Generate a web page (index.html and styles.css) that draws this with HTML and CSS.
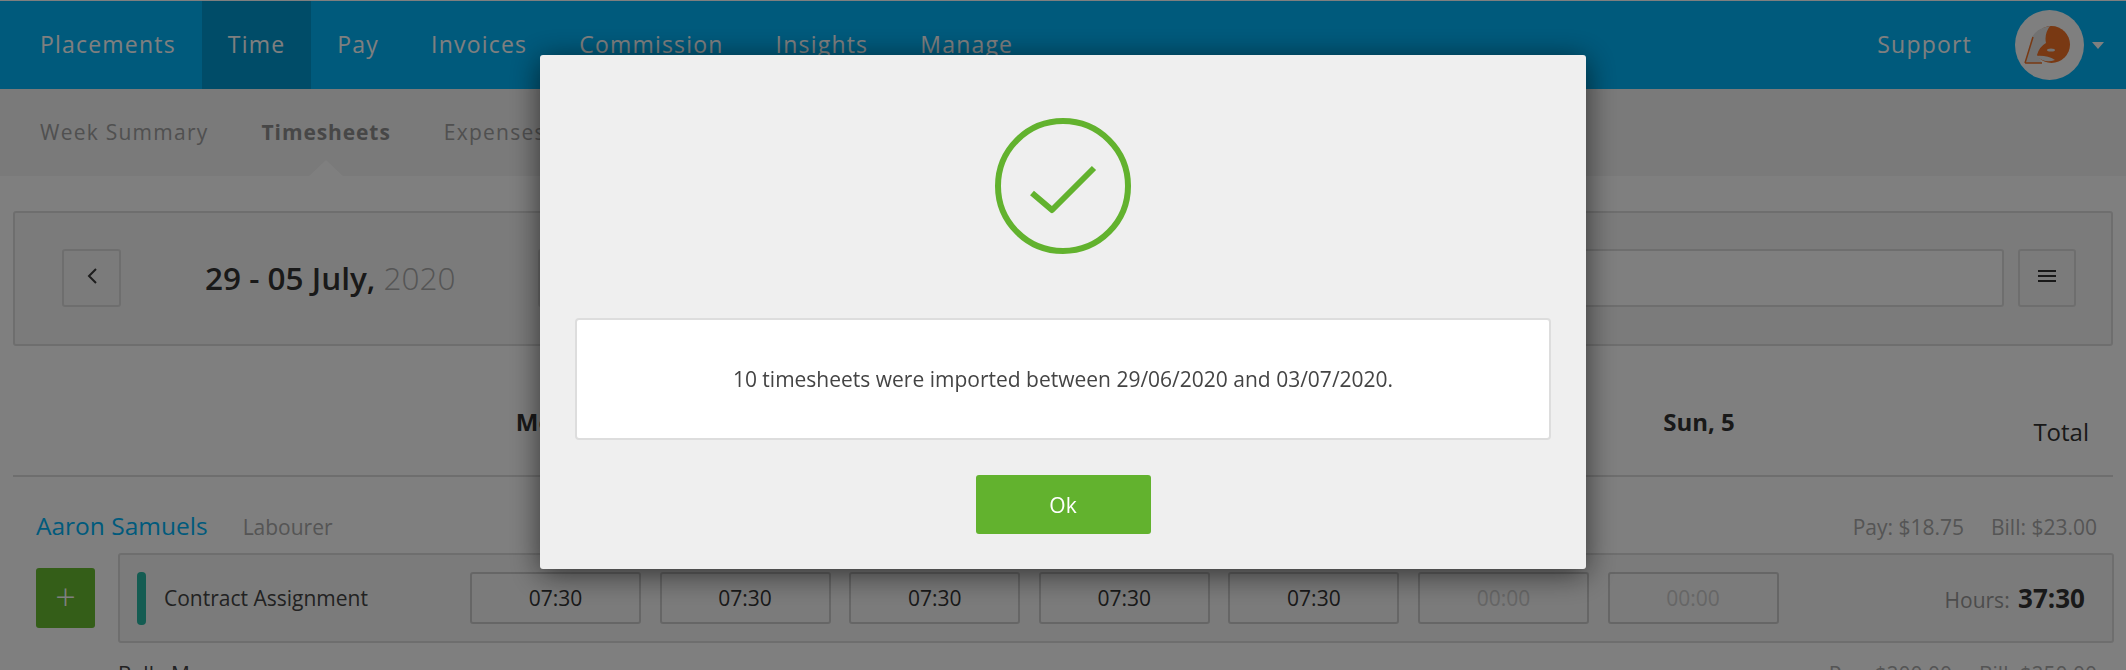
FILE: index.html
```html
<!DOCTYPE html>
<html lang="en">
<head>
    <meta charset="UTF-8">
    <title>Timesheets</title>
    <link rel="stylesheet" href="styles.css">
</head>
<body>
    <nav class="topbar">
        <a class="top-link">Placements</a>
        <a class="top-link active">Time</a>
        <a class="top-link">Pay</a>
        <a class="top-link">Invoices</a>
        <a class="top-link">Commission</a>
        <a class="top-link">Insights</a>
        <a class="top-link">Manage</a>
        <a class="top-link support">Support</a>
        <div class="avatar">
            <svg viewBox="0 0 69 70" width="69" height="70">
                <circle cx="36.5" cy="34.5" r="18.5" fill="#f27226"/>
                <path d="M10 53 L17 27 Q22 18 35 16 Q29 24 31 33 Q24 37 22 45 L27 53 Z" fill="#e4e4e4"/>
                <path d="M10 53 L18 27 M10 53 L27 53" stroke="#f27226" stroke-width="1.5" fill="none"/>
                <ellipse cx="36" cy="40" rx="4" ry="1.6" fill="#e8e8e8"/>
                <path d="M21 46 Q32 45 40 50 Q30 54 21 46 Z" fill="#e8e8e8"/>
            </svg>
        </div>
        <span class="caret"></span>
    </nav>

    <div class="subnav">
        <a class="sub-link">Week Summary</a>
        <a class="sub-link active">Timesheets</a>
        <a class="sub-link">Expenses</a>
    </div>

    <section class="filter-bar">
        <button class="square-btn back-btn">
            <svg viewBox="0 0 12 18" width="12" height="18"><path d="M10 2 L3 9 L10 16" fill="none" stroke="#3a3a3a" stroke-width="2"/></svg>
        </button>
        <h2 class="date-range">29 - 05 July, <span>2020</span></h2>
        <div class="search-box"></div>
        <button class="square-btn menu-btn">
            <svg viewBox="0 0 18 14" width="18" height="14"><path d="M0 2 H18 M0 7 H18 M0 12 H18" stroke="#333" stroke-width="2"/></svg>
        </button>
    </section>

    <div class="day-head">
        <span class="day">Mon, 29</span>
        <span class="day">Tue, 30</span>
        <span class="day">Wed, 1</span>
        <span class="day">Thu, 2</span>
        <span class="day">Fri, 3</span>
        <span class="day">Sat, 4</span>
        <span class="day">Sun, 5</span>
        <span class="total-label">Total</span>
    </div>

    <section class="worker">
        <div class="worker-head">
            <a class="worker-name">Aaron Samuels</a>
            <span class="worker-role">Labourer</span>
            <span class="rates"><span>Pay: $18.75</span><span>Bill: $23.00</span></span>
        </div>
        <div class="worker-row">
            <button class="add-btn">+</button>
            <div class="assignment">
                <span class="color-bar"></span>
                <span class="assignment-name">Contract Assignment</span>
                <div class="cells">
                    <div class="cell">07:30</div>
                    <div class="cell">07:30</div>
                    <div class="cell">07:30</div>
                    <div class="cell">07:30</div>
                    <div class="cell">07:30</div>
                    <div class="cell empty">00:00</div>
                    <div class="cell empty">00:00</div>
                </div>
                <div class="hours">Hours: <b>37:30</b></div>
            </div>
        </div>
    </section>

    <section class="worker next">
        <span class="next-name">Bella Moore</span>
        <span class="rates"><span>Pay: $200.00</span><span>Bill: $250.00</span></span>
    </section>

    <div class="overlay">
        <div class="modal">
            <svg class="check" viewBox="0 0 136 136" width="136" height="136">
                <circle cx="68" cy="68" r="65" fill="none" stroke="#62b22e" stroke-width="6"/>
                <path d="M37 75 L57 92 L99 50" fill="none" stroke="#62b22e" stroke-width="6" stroke-linejoin="round"/>
            </svg>
            <div class="message">10 timesheets were imported between 29/06/2020 and 03/07/2020.</div>
            <button class="ok-btn">Ok</button>
        </div>
    </div>
</body>
</html>
```

FILE: styles.css
```css
* {
    box-sizing: border-box;
}

html, body {
    height: 670px;
    overflow: hidden;
}

body {
    margin: 0;
    font-family: 'Open Sans', sans-serif;
    background-color: #fff;
    color: #333;
}

button {
    font-family: inherit;
}

/* Top bar */
.topbar {
    display: flex;
    align-items: center;
    height: 88px;
    margin-top: 1px;
    padding: 0 22px 0 14px;
    background-color: #00b4f8;
}

.top-link {
    display: flex;
    align-items: center;
    height: 100%;
    padding: 0 26px 3px;
    font-size: 23px;
    letter-spacing: 1.2px;
    color: #fff;
}

.top-link.active {
    background-color: #0098d0;
}

.top-link.support {
    margin-left: auto;
    padding: 0 43px 3px 0;
}

.avatar {
    width: 69px;
    height: 70px;
    border-radius: 50%;
    background-color: #fff;
    overflow: hidden;
}

.caret {
    margin-left: 8px;
    border-left: 6px solid transparent;
    border-right: 6px solid transparent;
    border-top: 7px solid #fff;
}

/* Sub nav */
.subnav {
    display: flex;
    align-items: center;
    gap: 53px;
    height: 87px;
    padding: 0 40px 2px;
    background-color: #f4f4f4;
}

.sub-link {
    font-size: 21px;
    letter-spacing: 1.25px;
    color: #a0a0a0;
}

.sub-link.active {
    font-weight: 700;
    letter-spacing: 0.9px;
    color: #8f8f8f;
    position: relative;
}

/* notch under the active tab */
.sub-link.active::after {
    content: "";
    position: absolute;
    left: 46px;
    top: 42px;
    border-left: 18px solid transparent;
    border-right: 18px solid transparent;
    border-bottom: 17px solid #fff;
}

/* Date filter */
.filter-bar {
    display: flex;
    align-items: center;
    height: 135px;
    margin: 35px 13px 0;
    padding: 0 35px 1px 47px;
    border: 2px solid #ddd;
    border-radius: 3px;
    background-color: #f7f7f7;
}

.square-btn {
    height: 58px;
    padding: 0;
    border: 2px solid #ddd;
    border-radius: 3px;
    background-color: #f7f7f7;
}

.back-btn {
    width: 59px;
}

.menu-btn {
    width: 58px;
    margin-left: 14px;
}

.date-range {
    width: 333px;
    margin: 0 0 2px 84px;
    font-size: 31.5px;
    font-weight: 600;
    color: #333;
}

.date-range span {
    font-weight: 300;
    color: #aaa;
}

.search-box {
    flex: 1;
    height: 58px;
    border: 2px solid #ddd;
    border-radius: 3px;
    background-color: #fff;
}

/* Day header */
.day-head {
    display: flex;
    align-items: flex-start;
    height: 131px;
    margin: 0 13px;
    padding: 59px 24px 0 455px;
    border-bottom: 2px solid #ddd;
}

.day {
    width: 189.4px;
    font-size: 24px;
    font-weight: 700;
    text-align: center;
    color: #333;
}

.total-label {
    margin-left: auto;
    padding-top: 10px;
    font-size: 24px;
    color: #333;
}

/* Worker rows */
.worker {
    margin: 0 12px 0 36px;
}

.worker-head {
    display: flex;
    align-items: baseline;
    height: 76px;
    padding-top: 32px;
    padding-right: 17px;
}

.worker-name {
    font-size: 24.5px;
    color: #00b4f8;
}

.worker-role {
    margin-left: 35px;
    font-size: 21px;
    color: #aaa;
}

.rates {
    display: flex;
    gap: 27px;
    margin-left: auto;
    font-size: 21px;
    color: #aaa;
}

.worker-row {
    display: flex;
    align-items: center;
    gap: 23px;
}

.add-btn {
    width: 59px;
    height: 60px;
    padding: 0 0 4px;
    border: none;
    border-radius: 3px;
    background-color: #68bc30;
    color: #fff;
    font-size: 36px;
    font-weight: 300;
}

.assignment {
    flex: 1;
    display: flex;
    align-items: center;
    height: 90px;
    padding: 0 27px 0 17px;
    border: 2px solid #ddd;
    border-radius: 3px;
    background-color: #f7f7f7;
}

.color-bar {
    width: 9px;
    height: 53px;
    border-radius: 4px;
    background-color: #28b8a4;
}

.assignment-name {
    width: 306px;
    margin-left: 18px;
    font-size: 21px;
    color: #444;
}

.cells {
    display: flex;
    gap: 18.6px;
}

.cell {
    width: 171px;
    height: 52px;
    display: flex;
    align-items: center;
    justify-content: center;
    border: 2px solid #ccc;
    border-radius: 3px;
    background-color: #f7f7f7;
    font-size: 21px;
    color: #333;
}

.cell.empty {
    color: #ccc;
}

.hours {
    margin-left: auto;
    font-size: 21px;
    color: #999;
}

.hours b {
    margin-left: 3px;
    font-size: 26px;
    color: #333;
}

.worker.next {
    display: flex;
    align-items: baseline;
    padding: 17px 17px 0 82px;
}

.next-name {
    font-size: 21px;
    color: #444;
}

/* Modal */
.overlay {
    position: fixed;
    inset: 0;
    display: flex;
    justify-content: center;
    align-items: flex-start;
    padding-top: 55px;
    background-color: rgba(0, 0, 0, 0.5);
}

.modal {
    display: flex;
    flex-direction: column;
    align-items: center;
    width: 1046px;
    height: 514px;
    padding: 63px 35px 0;
    border-radius: 3px;
    background-color: #efefef;
    box-shadow: 0 5px 30px rgba(0, 0, 0, 0.6);
}

.message {
    width: 100%;
    height: 122px;
    margin-top: 64px;
    display: flex;
    align-items: center;
    justify-content: center;
    border: 2px solid #ddd;
    border-radius: 4px;
    background-color: #fff;
    font-size: 21px;
    color: #444;
}

.ok-btn {
    width: 175px;
    height: 59px;
    margin-top: 35px;
    border: none;
    border-radius: 3px;
    background-color: #62b22e;
    color: #fff;
    font-size: 21px;
}
```
